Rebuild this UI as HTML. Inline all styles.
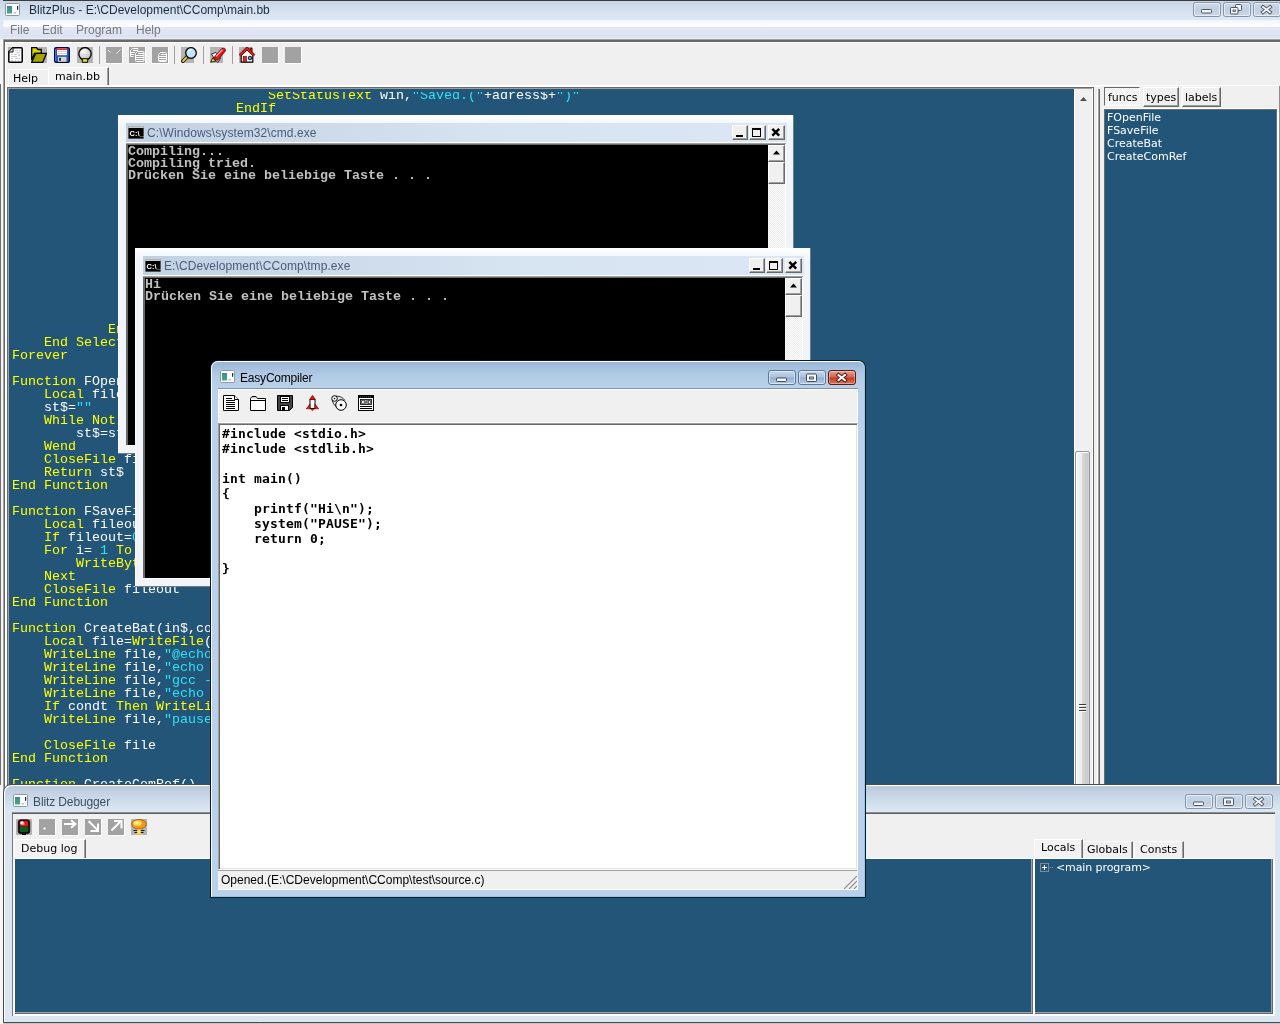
<!DOCTYPE html>
<html lang="en">
<head>
<meta charset="utf-8">
<title>BlitzPlus - E:\CDevelopment\CComp\main.bb</title>
<style>
*{box-sizing:border-box;margin:0;padding:0}
html,body{width:1280px;height:1024px;overflow:hidden;background:#dce7f4}
body{position:relative;font-family:"Liberation Sans",sans-serif;font-size:12px;color:#000}
.a{position:absolute}
body>div{will-change:transform}
.ui{font-family:"Liberation Sans",sans-serif;font-size:12px;white-space:pre}
.vd{font-family:"DejaVu Sans","Liberation Sans",sans-serif;font-size:11px;white-space:pre}
.blue{background:#235578}
.face{background:#f0f0f0}
/* ---------- main window ---------- */
#main{left:0;top:0;width:1280px;height:1024px;background:#dce7f4}
#mtitle{left:0;top:0;width:1280px;height:20px;background:linear-gradient(#c6d4e4,#d4e0ee 50%,#dde8f4)}
#mtitle .topline{left:3px;top:0;width:1277px;height:1px;background:#3c3c3c}
#mmenu{left:3px;top:20px;width:1277px;height:19px;background:linear-gradient(#f1f5fa 0,#fdfdfe 30%,#fefefe 36%,#e3e7f6 38%,#dde1f2 90%,#eceff7 100%)}
#mmenu span{position:absolute;top:3px;color:#7a7a7a;font-size:12px}
#mclient{background:#f0f0f0}
.code{font-family:"Liberation Mono",monospace;font-size:13.333px;line-height:13px;white-space:pre;color:#ffffff}
.code i{font-style:normal;color:#ffff00}
.code b{font-weight:normal;color:#30e0f4}
.code div{height:13px}
.capm{width:28px;height:15px;border:1px solid #8595ab;border-radius:2.5px;background:linear-gradient(#cbd8e7,#c0cfe1 50%,#cad7e7);box-shadow:inset 0 0 0 1px rgba(255,255,255,.55)}
/*CMDCSS*/
.cmd{background:linear-gradient(#fdfeff,#f1f5fb 12px,#f1f5fb);box-shadow:inset -1px -1px 0 #6f7b89, inset 1px 1px 0 #fff}
.cmdtitle{background:linear-gradient(90deg,#c2d1e2,#d6e3f1 55%,#dbe7f4)}
.cbtn{height:15px;background:#f0f0f0;border:1px solid;border-color:#fff #696969 #696969 #fff;box-shadow:inset -1px -1px 0 #a0a0a0}
.con{background:#000;color:#c0c0c0;font-family:"Liberation Mono",monospace;font-weight:bold;font-size:13.333px;line-height:12px;white-space:pre;overflow:hidden;padding-top:1px}
.sbtrack{background-color:#f6f6f6;background-image:repeating-conic-gradient(#fff 0 25%,#ececec 0 50%);background-size:2px 2px}
.sbbtn{background:#f0f0f0;border:1px solid;border-color:#fff #696969 #696969 #fff;box-shadow:inset -1px -1px 0 #a0a0a0}
/*/CMDCSS*//*TOPCSS*/
#dbg{background:#dbe6f3;border-radius:8px 0 0 0;box-shadow:0 2px 0 #c4c4c4}
.capi{width:28px;height:15px;border:1px solid #8595ab;border-radius:2.5px;background:linear-gradient(#cbd8e7,#c0cfe1 50%,#cad7e7);box-shadow:inset 0 0 0 1px rgba(255,255,255,.55)}
#easyo{background:#0a1628;border-radius:8px 8px 0 0}
#easy{background:#b9d1ea;border-radius:7px 7px 0 0;box-shadow:inset 1px 1px 0 rgba(255,255,255,.95), inset -1px -1px 0 #7fd0e8}
.capa{height:15px;border:1px solid #5f7796;border-radius:3px;background:linear-gradient(#c6d8ec,#a9c1de 48%,#93b0d2 52%,#b4cbe4);box-shadow:inset 0 0 0 1px rgba(255,255,255,.5)}
.capx{height:15px;border:1px solid #5a1d12;border-radius:3px;background:linear-gradient(#e6a092,#d0644e 48%,#bf3a20 52%,#d8735a);box-shadow:inset 0 0 0 1px rgba(255,255,255,.35)}
.fixed{font-family:"DejaVu Sans Mono","Liberation Mono",monospace;font-weight:bold;font-size:13px;letter-spacing:.17px;line-height:15px;white-space:pre;color:#000}
/*/TOPCSS*/</style>
</head>
<body>
<!-- ================= BlitzPlus main window ================= -->
<div id="main" class="a">
  <div id="mtitle" class="a"><div class="a topline"></div>
    <svg class="a" style="left:5px;top:3px" width="15" height="13" viewBox="0 0 15 13"><defs><linearGradient id="ag0" x1="0" y1="0" x2="0" y2="1"><stop offset="0" stop-color="#3f7fb0"/><stop offset=".35" stop-color="#3e9a8a"/><stop offset="1" stop-color="#48a878"/></linearGradient></defs><rect x=".5" y=".5" width="14" height="12" rx="1" fill="#fdfdfd" stroke="#8d99a6"/><rect x="2" y="3" width="5" height="7.500" fill="url(#ag0)"/><rect x="8.500" y="9" width="2.500" height="1.500" fill="#c0c0c0"/><rect x="12" y="3" width="1.200" height="3.800" fill="#1c2c3c"/></svg>
    <div class="a ui" style="left:29px;top:3px;color:#1e2b3c">BlitzPlus - E:\CDevelopment\CComp\main.bb</div>
  <div class="a capm" style="left:1193px;top:2px"><svg width="26" height="13" viewBox="0 0 26 13" style="display:block"><rect x="7.500" y="6.500" width="10" height="3.500" rx=".8" fill="#f4f6f9" stroke="#4c5666"/></svg></div>
    <div class="a capm" style="left:1223px;top:2px"><svg width="26" height="13" viewBox="0 0 26 13" style="display:block"><rect x="11.500" y="1.500" width="6" height="6" rx=".8" fill="#f4f6f9" stroke="#4c5666"/><rect x="6.500" y="4.500" width="7.500" height="6.500" rx=".8" fill="#f4f6f9" stroke="#4c5666"/><rect x="9" y="7" width="2.500" height="1.500" fill="#c8d4e2" stroke="#4c5666" stroke-width=".8"/></svg></div>
    <div class="a capm" style="left:1253px;top:2px"><svg width="26" height="13" viewBox="0 0 26 13" style="display:block"><path d="M9 4L16 9.200M16 4L9 9.200" stroke="#4c5666" stroke-width="3.600" stroke-linecap="square"/><path d="M9 4L16 9.200M16 4L9 9.200" stroke="#f4f6f9" stroke-width="1.800" stroke-linecap="square"/></svg></div>
  </div>
  <div id="mmenu" class="a">
    <span style="left:7px">File</span><span style="left:39px">Edit</span><span style="left:73px">Program</span><span style="left:133px">Help</span>
  </div>
  <div class="a" style="left:0;top:39px;width:3px;height:985px;background:#f6f6f6"></div>
  <div class="a" style="left:0;top:84px;width:1px;height:701px;background:#6d6d6d"></div>
  <div class="a" style="left:3px;top:39px;width:1277px;height:985px;background:#a0a0a0"></div>
  <div class="a" style="left:4px;top:40px;width:1276px;height:984px;background:#696969"></div>
  <div class="a" style="left:5px;top:42px;width:1275px;height:982px;background:#fff"></div>
  <div id="mclient" class="a" style="left:6px;top:43px;width:1274px;height:981px"></div>
  <div class="a" style="left:6px;top:85px;width:1px;height:939px;background:#fff"></div>
</div>
<!--MAIN-CONTENT-->
<svg class="a" style="left:8px;top:47px" width="16" height="16" viewBox="0 0 16 16" ><path d="M0 0h6v4h-6z" fill="#b4b4b4"/><path d="M4.800 .8H13.200Q14.200 .8 14.200 1.800V14.200Q14.200 15.200 13.200 15.200H1.800Q.8 15.200 .8 14.200V4.800Z" fill="#fff" stroke="#000" stroke-width="1.500"/><path d="M5 1V5H1" fill="#f4f4f4" stroke="#000" stroke-width="1"/><path d="M7 3.500h3M11 3.500h1.500M8 5.500h4M3 7.500h2M6 7.500h3M3 9.500h6M3 11.500h2M7 11.500h5M3 13.500h2M7 13.500h1M10 13.500h1" stroke="#d0d0d0"/><rect x="10" y="7" width="2" height="2" fill="#d0d0d0"/></svg>
<svg class="a" style="left:31px;top:47px" width="16" height="16" viewBox="0 0 16 16" ><rect width="16" height="16" fill="#b4b4b4"/><path d="M.7 .7H5.500L7 2.500H10.300V6.500H3.500L.7 13Z" fill="#d6d600" stroke="#000" stroke-width="1.300"/><path d="M4.800 6.300H15.500L11.800 15.300H.7Z" fill="#a4a400" stroke="#000" stroke-width="1.300"/></svg>
<svg class="a" style="left:54px;top:47px" width="16" height="16" viewBox="0 0 16 16" ><rect x=".6" y=".6" width="14.800" height="14.800" rx="1.500" fill="#1f58c0" stroke="#00083a" stroke-width="1.200"/><path d="M1.500 2v12" stroke="#3d78d8" stroke-width="1"/><rect x="3" y="1.200" width="10" height="7" fill="#fff"/><rect x="3" y="1.200" width="10" height="1.800" fill="#e03030"/><path d="M3 4.500h10M3 6.500h10" stroke="#f0c8c8"/><rect x="4" y="9.800" width="8.500" height="5" fill="#d8d4cc"/><rect x="5" y="10.800" width="2" height="3" fill="#303030"/></svg>
<svg class="a" style="left:77px;top:47px" width="16" height="16" viewBox="0 0 16 16" ><rect width="16" height="16" fill="#b4b4b4"/><defs><radialGradient id="bg" cx=".4" cy=".35" r=".7"><stop offset="0" stop-color="#fff"/><stop offset="1" stop-color="#b8b8b8"/></radialGradient></defs><circle cx="8" cy="6.800" r="6.200" fill="url(#bg)" stroke="#000" stroke-width="1.300"/><ellipse cx="8" cy="8.500" rx="2.500" ry="1.500" fill="none" stroke="#c8d0d8" stroke-width=".8"/><path d="M5.300 11.700h5.400v3.600h-5.400z" fill="#e8e020" stroke="#000" stroke-width="1"/></svg>
<svg class="a" style="left:106px;top:47px" width="16" height="16" viewBox="0 0 16 16" ><rect width="16" height="16" fill="#a2a2a2"/><path d="M2 3l2.300 2.300M10.500 6.500l4-4" stroke="#fff" stroke-width="1"/></svg>
<div class="a" style="left:106px;top:47px;width:17px;height:17px;border-right:1px solid #fff;border-bottom:1px solid #fff"></div>
<svg class="a" style="left:129px;top:47px" width="16" height="16" viewBox="0 0 16 16" ><rect width="16" height="16" fill="#a2a2a2"/><path d="M3.500 1.500h5.500v1M1.500 3.500v6h3M1.500 3.500l2-2" fill="none" stroke="#fff"/><path d="M4 3.500h5M2 5.500h4M2 7.500h3" stroke="#fff"/><path d="M8.500 4.500h5.500q1 0 1 1v8q0 1-1 1h-6.500q-1 0-1-1v-7z" fill="#a2a2a2" stroke="#fff"/><path d="M9 6.500h6M7 8.500h8M7 10.500h8M7 12.500h8" stroke="#fff"/></svg>
<div class="a" style="left:129px;top:47px;width:17px;height:17px;border-right:1px solid #fff;border-bottom:1px solid #fff"></div>
<svg class="a" style="left:152px;top:47px" width="16" height="16" viewBox="0 0 16 16" ><rect width="16" height="16" fill="#a2a2a2"/><path d="M8.500 5.500h5q1 0 1 1v7q0 1-1 1h-6q-1 0-1-1v-6z" fill="#a2a2a2" stroke="#fff"/><path d="M9 7.500h5M7 9.500h7M7 11.500h7M7 13.500h7" stroke="#fff"/></svg>
<div class="a" style="left:152px;top:47px;width:17px;height:17px;border-right:1px solid #fff;border-bottom:1px solid #fff"></div>
<svg class="a" style="left:181px;top:47px" width="16" height="16" viewBox="0 0 16 16" ><rect width="13" height="16" fill="#b4b4b4"/><path d="M6.500 9.500L2 14" stroke="#000" stroke-width="3.600" stroke-linecap="round"/><path d="M6.500 9.500L2 14" stroke="#e8e020" stroke-width="1.800" stroke-linecap="round"/><circle cx="10" cy="6" r="5.300" fill="#c4e6f8" stroke="#000" stroke-width="1.300"/><path d="M7 4.500Q8 2.500 10.500 2.500" stroke="#fff" stroke-width="1" fill="none"/></svg>
<svg class="a" style="left:210px;top:47px" width="16" height="16" viewBox="0 0 16 16" ><rect width="13" height="16" fill="#b4b4b4"/><path d="M1.500 7L6 5.500L10.500 11L8 15.500L5 13Z" fill="#fff" stroke="#000" stroke-width=".8"/><path d="M3.500 11L11.500 1.800Q15.800 -.2 15.300 4L7.500 13.500Z" fill="#e01818" stroke="#600" stroke-width=".9"/><path d="M6 9.500L12.500 2.500" stroke="#ffa0a0" stroke-width="1.300"/><path d="M.8 15.200L2.500 11L6 14Z" fill="#f8e020" stroke="#000" stroke-width=".8"/></svg>
<svg class="a" style="left:239px;top:47px" width="16" height="16" viewBox="0 0 16 16" ><rect x="0" width="13" height="16" fill="#b4b4b4"/><path d="M2.200 8V15.200H13.800V8L8 2.500Z" fill="#fff" stroke="#000" stroke-width="1.200"/><rect x="11" y="1" width="2.200" height="4.500" fill="#c01010" stroke="#400" stroke-width=".5"/><path d="M.8 8.500L8 1.300L15.200 8.500" fill="none" stroke="#500" stroke-width="3"/><path d="M.8 8.500L8 1.300L15.200 8.500" fill="none" stroke="#d82020" stroke-width="1.800"/><rect x="4.200" y="9.500" width="3.300" height="5.500" fill="#e82020" stroke="#600" stroke-width=".6"/><circle cx="11" cy="11" r="1.800" fill="#40a8e8" stroke="#000" stroke-width=".9"/></svg>
<svg class="a" style="left:262px;top:47px" width="16" height="16" viewBox="0 0 16 16" ><rect width="16" height="16" fill="#a2a2a2"/></svg>
<div class="a" style="left:262px;top:47px;width:17px;height:17px;border-right:1px solid #fff;border-bottom:1px solid #fff"></div>
<svg class="a" style="left:285px;top:47px" width="16" height="16" viewBox="0 0 16 16" ><rect width="16" height="16" fill="#a2a2a2"/></svg>
<div class="a" style="left:285px;top:47px;width:17px;height:17px;border-right:1px solid #fff;border-bottom:1px solid #fff"></div>
<div class="a" style="left:99px;top:46px;width:1px;height:18px;background:#a0a0a0"></div>
<div class="a" style="left:174px;top:46px;width:1px;height:18px;background:#a0a0a0"></div>
<div class="a" style="left:203px;top:46px;width:1px;height:18px;background:#a0a0a0"></div>
<div class="a" style="left:232px;top:46px;width:1px;height:18px;background:#a0a0a0"></div>
<div class="a" style="left:8px;top:69px;width:40px;height:17px;border-top:1px solid #fff;border-left:1px solid #fff;background:#f0f0f0"></div>
<div class="a vd" style="left:13px;top:72px">Help</div>
<div class="a" style="left:48px;top:67px;width:61px;height:19px;border-top:1px solid #fff;border-left:1px solid #fff;border-right:1px solid #696969;box-shadow:inset -1px 0 0 #a0a0a0;background:#f3f3f3"></div>
<div class="a vd" style="left:55px;top:70px">main.bb</div>
<div class="a" style="left:5px;top:85px;width:1274px;height:2px;background:#fff"></div><div class="a" style="left:1100px;top:86px;width:179px;height:1px;background:#f0f0f0"></div>
<div class="a" style="left:7px;top:87px;width:1087px;height:720px;background:#696969"></div>
<div class="a" style="left:8px;top:88px;width:1085px;height:720px;background:#a0a0a0"></div>
<div class="a blue" id="ed" style="left:9px;top:89px;width:1065px;height:720px;overflow:hidden">

<div class="a code" style="left:3px;top:0px">                                <i>SetStatusText</i> win,<b>"Saved.("</b>+adress$+<b>")"</b></div>
<div class="a code" style="left:3px;top:13px">                            <i>EndIf</i></div>
<div class="a code" style="left:3px;top:234px">            <i>EndIf</i></div>
<div class="a code" style="left:3px;top:247px">    <i>End Select</i></div>
<div class="a code" style="left:3px;top:260px"><i>Forever</i></div>
<div class="a code" style="left:3px;top:286px"><i>Function</i> FOpenFile(adress$)</div>
<div class="a code" style="left:3px;top:299px">    <i>Local</i> file=<i>ReadFile</i>(adress$)</div>
<div class="a code" style="left:3px;top:312px">    st$=<b>""</b></div>
<div class="a code" style="left:3px;top:325px">    <i>While Not Eof</i>(file)</div>
<div class="a code" style="left:3px;top:338px">        st$=st$+<i>Chr</i>(<i>ReadByte</i>(file))</div>
<div class="a code" style="left:3px;top:351px">    <i>Wend</i></div>
<div class="a code" style="left:3px;top:364px">    <i>CloseFile</i> file</div>
<div class="a code" style="left:3px;top:377px">    <i>Return</i> st$</div>
<div class="a code" style="left:3px;top:390px"><i>End Function</i></div>
<div class="a code" style="left:3px;top:416px"><i>Function</i> FSaveFile(adress$,st$)</div>
<div class="a code" style="left:3px;top:429px">    <i>Local</i> fileout=<i>WriteFile</i>(adress$)</div>
<div class="a code" style="left:3px;top:442px">    <i>If</i> fileout=<b>0</b> <i>Then Return</i></div>
<div class="a code" style="left:3px;top:455px">    <i>For</i> i= <b>1</b> <i>To Len</i>(st$)</div>
<div class="a code" style="left:3px;top:468px">        <i>WriteByte</i> fileout,<i>Asc</i>(<i>Mid</i>(st$,i,<b>1</b>))</div>
<div class="a code" style="left:3px;top:481px">    <i>Next</i></div>
<div class="a code" style="left:3px;top:494px">    <i>CloseFile</i> fileout</div>
<div class="a code" style="left:3px;top:507px"><i>End Function</i></div>
<div class="a code" style="left:3px;top:533px"><i>Function</i> CreateBat(in$,condt)</div>
<div class="a code" style="left:3px;top:546px">    <i>Local</i> file=<i>WriteFile</i>(<b>"tmp.bat"</b>)</div>
<div class="a code" style="left:3px;top:559px">    <i>WriteLine</i> file,<b>"@echo off"</b></div>
<div class="a code" style="left:3px;top:572px">    <i>WriteLine</i> file,<b>"echo Compiling..."</b></div>
<div class="a code" style="left:3px;top:585px">    <i>WriteLine</i> file,<b>"gcc -o tmp.exe "</b>+in$</div>
<div class="a code" style="left:3px;top:598px">    <i>WriteLine</i> file,<b>"echo Compiling tried."</b></div>
<div class="a code" style="left:3px;top:611px">    <i>If</i> condt <i>Then WriteLine</i> file,<b>"tmp.exe"</b></div>
<div class="a code" style="left:3px;top:624px">    <i>WriteLine</i> file,<b>"pause"</b></div>
<div class="a code" style="left:3px;top:650px">    <i>CloseFile</i> file</div>
<div class="a code" style="left:3px;top:663px"><i>End Function</i></div>
<div class="a code" style="left:3px;top:689px"><i>Function</i> CreateComRef()</div>
<div class="a blue" style="left:0;top:0;width:1065px;height:3px"></div>
</div>
<div class="a" style="left:1074px;top:89px;width:1px;height:720px;background:#fff"></div>
<div class="a" style="left:1075px;top:89px;width:17px;height:720px;background:#f0f0f0"></div>
<div class="a" style="left:1092px;top:88px;width:1px;height:720px;background:#fff"></div>
<svg class="a" style="left:1080px;top:97px" width="7" height="4" viewBox="0 0 7 4"><path d="M0 4L3.500 0L7 4Z" fill="#505050"/></svg>
<div class="a" style="left:1075px;top:451px;width:15px;height:340px;border:1px solid #979797;border-radius:2px;box-shadow:inset 1px 1px 0 #fff;background:linear-gradient(90deg,#f6f6f6,#ececec 42%,#d6d6da 52%,#cacace 90%,#d8d8dc)"></div>
<div class="a" style="left:1079px;top:704px;width:7px;height:1px;background:#3c3c3c;box-shadow:0 1px 0 #fafafa,0 3px 0 #3c3c3c,0 4px 0 #fafafa,0 6px 0 #3c3c3c,0 7px 0 #fafafa"></div>

<div class="a" style="left:1097px;top:89px;width:1px;height:720px;background:#fff"></div>
<div class="a" style="left:1098px;top:89px;width:1px;height:720px;background:#a0a0a0"></div><div class="a" style="left:1099px;top:89px;width:1px;height:720px;background:#696969"></div>
<div class="a" style="left:1104px;top:87px;width:36px;height:19px;border:1px solid;border-color:#696969 #fff #fff #696969;background:#f8f8f8;background-image:repeating-conic-gradient(#fff 0 25%,#ececec 0 50%);background-size:2px 2px"></div>
<div class="a vd" style="left:1108px;top:91px">funcs</div>
<div class="a" style="left:1143px;top:87px;width:36px;height:20px;border:1px solid;border-color:#fff #696969 #696969 #fff;box-shadow:inset -1px -1px 0 #a0a0a0;background:#f0f0f0"></div>
<div class="a vd" style="left:1146px;top:91px">types</div>
<div class="a" style="left:1182px;top:87px;width:39px;height:20px;border:1px solid;border-color:#fff #696969 #696969 #fff;box-shadow:inset -1px -1px 0 #a0a0a0;background:#f0f0f0"></div>
<div class="a vd" style="left:1185px;top:91px">labels</div>
<div class="a" style="left:1103px;top:108px;width:176px;height:700px;background:#fff"></div><div class="a" style="left:1103px;top:109px;width:1px;height:700px;background:#f0f0f0"></div><div class="a" style="left:1104px;top:109px;width:173px;height:700px;background:#626e78"></div>
<div class="a blue" style="left:1105px;top:110px;width:171px;height:700px"></div>
<div class="a" style="left:1279px;top:86px;width:1px;height:722px;background:#8e8e8e"></div>
<div class="a vd" style="left:1107px;top:111px;color:#fff;line-height:13px">FOpenFile
FSaveFile
CreateBat
CreateComRef</div>

<!--/MAIN-CONTENT-->
<!--CMD1-->
<div class="a cmd" style="left:118px;top:115px;width:676px;height:339px">
<div class="a cmdtitle" style="left:8px;top:8px;width:661px;height:19px"></div>
<svg class="a" style="left:10px;top:11px" width="16" height="13" viewBox="0 0 15 13" preserveAspectRatio="none"><rect width="15" height="13" fill="#000"/><rect x="0" y="0" width="15" height="2" fill="#c8c8c8"/><rect x="0" y="0" width="15" height="13" fill="none" stroke="#9aa4b0" stroke-width="1"/><text x="1.500" y="10" font-family="Liberation Sans,sans-serif" font-weight="bold" font-size="7" fill="#fff">C:\_</text></svg>
<div class="a ui" style="left:29px;top:12px;color:#4a5c7c;line-height:13px;letter-spacing:.08px">C:\Windows\system32\cmd.exe</div>
<div class="a cbtn" style="left:614px;top:10px;width:16px"><svg width="14" height="13" viewBox="0 0 14 13" style="display:block"><rect x="3" y="9" width="7" height="2" fill="#000"/></svg></div>
<div class="a cbtn" style="left:631px;top:10px;width:17px"><svg width="14" height="13" viewBox="0 0 14 13" style="display:block"><rect x="2.500" y="3" width="8" height="7.500" fill="none" stroke="#000"/><rect x="2" y="2" width="9" height="2" fill="#000"/></svg></div>
<div class="a cbtn" style="left:650px;top:10px;width:17px"><svg width="14" height="13" viewBox="0 0 14 13" style="display:block"><path d="M3.300 2.800L10.200 9.700M10.200 2.800L3.300 9.700" stroke="#000" stroke-width="2.400"/></svg></div>
<div class="a" style="left:8px;top:27px;width:660px;height:1px;background:#fff"></div>
<div class="a" style="left:8px;top:28px;width:660px;height:1px;background:#a0a0a0"></div>
<div class="a" style="left:8px;top:29px;width:660px;height:302px;background:#fff"></div><div class="a" style="left:8px;top:29px;width:659px;height:301px;background:#696969"></div>
<div class="a con" style="left:10px;top:30px;width:640px;height:300px">Compiling...
Compiling tried.
Drücken Sie eine beliebige Taste . . .</div>
<div class="a sbtrack" style="left:650px;top:30px;width:17px;height:300px"></div>
<div class="a sbbtn" style="left:650px;top:30px;width:17px;height:17px"><svg width="15" height="15" viewBox="0 0 15 15" style="display:block"><path d="M4 8.500L7.500 4.500L11 8.500Z" fill="#000"/></svg></div>
<div class="a sbbtn" style="left:650px;top:47px;width:17px;height:22px"></div>
<div class="a" style="left:667px;top:29px;width:1px;height:301px;background:#fff"></div>
</div>
<!--/CMD1-->
<!--CMD2-->
<div class="a cmd" style="left:135px;top:248px;width:676px;height:339px">
<div class="a cmdtitle" style="left:8px;top:8px;width:661px;height:19px"></div>
<svg class="a" style="left:10px;top:11px" width="16" height="13" viewBox="0 0 15 13" preserveAspectRatio="none"><rect width="15" height="13" fill="#000"/><rect x="0" y="0" width="15" height="2" fill="#c8c8c8"/><rect x="0" y="0" width="15" height="13" fill="none" stroke="#9aa4b0" stroke-width="1"/><text x="1.500" y="10" font-family="Liberation Sans,sans-serif" font-weight="bold" font-size="7" fill="#fff">C:\_</text></svg>
<div class="a ui" style="left:29px;top:12px;color:#4a5c7c;line-height:13px;letter-spacing:.08px">E:\CDevelopment\CComp\tmp.exe</div>
<div class="a cbtn" style="left:614px;top:10px;width:16px"><svg width="14" height="13" viewBox="0 0 14 13" style="display:block"><rect x="3" y="9" width="7" height="2" fill="#000"/></svg></div>
<div class="a cbtn" style="left:631px;top:10px;width:17px"><svg width="14" height="13" viewBox="0 0 14 13" style="display:block"><rect x="2.500" y="3" width="8" height="7.500" fill="none" stroke="#000"/><rect x="2" y="2" width="9" height="2" fill="#000"/></svg></div>
<div class="a cbtn" style="left:650px;top:10px;width:17px"><svg width="14" height="13" viewBox="0 0 14 13" style="display:block"><path d="M3.300 2.800L10.200 9.700M10.200 2.800L3.300 9.700" stroke="#000" stroke-width="2.400"/></svg></div>
<div class="a" style="left:8px;top:27px;width:660px;height:1px;background:#fff"></div>
<div class="a" style="left:8px;top:28px;width:660px;height:1px;background:#a0a0a0"></div>
<div class="a" style="left:8px;top:29px;width:660px;height:302px;background:#fff"></div><div class="a" style="left:8px;top:29px;width:659px;height:301px;background:#696969"></div>
<div class="a con" style="left:10px;top:30px;width:640px;height:300px">Hi
Drücken Sie eine beliebige Taste . . .</div>
<div class="a sbtrack" style="left:650px;top:30px;width:17px;height:300px"></div>
<div class="a sbbtn" style="left:650px;top:30px;width:17px;height:17px"><svg width="15" height="15" viewBox="0 0 15 15" style="display:block"><path d="M4 8.500L7.500 4.500L11 8.500Z" fill="#000"/></svg></div>
<div class="a sbbtn" style="left:650px;top:47px;width:17px;height:22px"></div>
<div class="a" style="left:667px;top:29px;width:1px;height:301px;background:#fff"></div>
</div>
<!--/CMD2-->
<!--DEBUGGER-->
<div class="a" id="dbg" style="left:3px;top:785px;width:1280px;height:237px">
<div class="a" style="left:0;top:0;width:1280px;height:28px;border-radius:8px 0 0 0;background:linear-gradient(#b9c9db,#c6d4e4 35%,#d6e2ef 75%,#dde8f4)"></div>
<svg class="a" style="left:10px;top:9px" width="15" height="13" viewBox="0 0 15 13"><defs><linearGradient id="ag1" x1="0" y1="0" x2="0" y2="1"><stop offset="0" stop-color="#3f7fb0"/><stop offset=".35" stop-color="#3e9a8a"/><stop offset="1" stop-color="#48a878"/></linearGradient></defs><rect x=".5" y=".5" width="14" height="12" rx="1" fill="#fdfdfd" stroke="#8d99a6"/><rect x="2" y="3" width="5" height="7.500" fill="url(#ag1)"/><rect x="8.500" y="9" width="2.500" height="1.500" fill="#c0c0c0"/><rect x="12" y="3" width="1.200" height="3.800" fill="#1c2c3c"/></svg>
<div class="a ui" style="left:30px;top:10px;color:#3d4f66;line-height:14px;letter-spacing:-.12px">Blitz Debugger</div>
<div class="a capi" style="left:1182px;top:9px"><svg width="26" height="13" viewBox="0 0 26 13" style="display:block"><rect x="7.500" y="7" width="10" height="3.500" rx=".8" fill="#f4f6f9" stroke="#4c5666"/></svg></div>
<div class="a capi" style="left:1212px;top:9px"><svg width="26" height="13" viewBox="0 0 26 13" style="display:block"><rect x="7.500" y="3" width="10" height="7.500" rx=".8" fill="#f4f6f9" stroke="#4c5666"/><rect x="10.500" y="6" width="4" height="2" fill="#c8d4e2" stroke="#4c5666" stroke-width=".9"/></svg></div>
<div class="a capi" style="left:1242px;top:9px"><svg width="26" height="13" viewBox="0 0 26 13" style="display:block"><path d="M9.200 4L15.800 9.200M15.800 4L9.200 9.200" stroke="#4c5666" stroke-width="3.600" stroke-linecap="square"/><path d="M9.200 4L15.800 9.200M15.800 4L9.200 9.200" stroke="#f4f6f9" stroke-width="1.800" stroke-linecap="square"/></svg></div>
<div class="a" style="left:9px;top:27px;width:1263px;height:1px;background:#8a9098"></div><div class="a" style="left:9px;top:28px;width:1263px;height:1px;background:#5e5e5e"></div>
<div class="a" style="left:9px;top:29px;width:1263px;height:202px;background:#f0f0f0;border-left:1px solid #7c7c7c"></div>

<svg class="a" style="left:13px;top:34px" width="16" height="16" viewBox="0 0 16 16"><rect width="16" height="16" fill="#b4b4b4"/><rect x="2.200" y=".7" width="11.600" height="14" rx="2.500" fill="#101010" stroke="#000" stroke-width=".6"/><rect x="3.800" y="2" width="8.400" height="5.500" rx="1" fill="#f01010"/><rect x="3.800" y="7.500" width="8.400" height="5.500" rx="1" fill="#0f5a1c"/><circle cx="6" cy="4" r="1.800" fill="#fff"/><circle cx="7.500" cy="5" r="1.200" fill="#ff9090"/><rect x="6" y="14.700" width="4" height="1.300" fill="#000"/></svg>
<svg class="a" style="left:36px;top:34px" width="16" height="16" viewBox="0 0 16 16"><rect width="16" height="16" fill="#a2a2a2"/><rect x="4.500" y="8.500" width="2" height="2" fill="#fff"/></svg>
<div class="a" style="left:36px;top:34px;width:17px;height:17px;border-right:1px solid #fff;border-bottom:1px solid #fff"></div>
<svg class="a" style="left:59px;top:34px" width="16" height="16" viewBox="0 0 16 16"><rect width="16" height="16" fill="#a2a2a2"/><path d="M2 5h11" stroke="#fff" stroke-width="2"/><path d="M9 1.200l4.500 3.800l-4.500 3.800" stroke="#fff" stroke-width="2" fill="none"/></svg>
<div class="a" style="left:59px;top:34px;width:17px;height:17px;border-right:1px solid #fff;border-bottom:1px solid #fff"></div>
<svg class="a" style="left:82px;top:34px" width="16" height="16" viewBox="0 0 16 16"><rect width="16" height="16" fill="#a2a2a2"/><path d="M3.500 2l9 9" stroke="#fff" stroke-width="2"/><path d="M13 4.500v7.500h-7.500" stroke="#fff" stroke-width="2" fill="none"/></svg>
<div class="a" style="left:82px;top:34px;width:17px;height:17px;border-right:1px solid #fff;border-bottom:1px solid #fff"></div>
<svg class="a" style="left:105px;top:34px" width="16" height="16" viewBox="0 0 16 16"><rect width="16" height="16" fill="#a2a2a2"/><path d="M3.500 11.500l9-9" stroke="#fff" stroke-width="2"/><path d="M6 2h7.500v7.500" stroke="#fff" stroke-width="2" fill="none"/></svg>
<div class="a" style="left:105px;top:34px;width:17px;height:17px;border-right:1px solid #fff;border-bottom:1px solid #fff"></div>
<svg class="a" style="left:128px;top:34px" width="16" height="16" viewBox="0 0 16 16"><rect width="16" height="16" fill="#b4b4b4"/><path d="M6.500 8h3l.3 5.500l2 2h-7.600l2-2z" fill="#f8c848"/><ellipse cx="8" cy="5.200" rx="7.400" ry="4.800" fill="#f09818" stroke="#a04800" stroke-width=".7"/><ellipse cx="6.500" cy="4.200" rx="4.200" ry="2.600" fill="#ffd850"/><ellipse cx="5.500" cy="3.500" rx="2" ry="1.200" fill="#fff4b0"/><path d="M2.500 11.500h4M9.500 11.500h4M3.500 13.500h3M9.500 13.500h3" stroke="#181818" stroke-width="1"/><path d="M6.500 10.500h3v4h-3z" fill="#ffe070"/></svg>
<div class="a" style="left:11px;top:54px;width:72px;height:19px;border-top:1px solid #fff;border-left:1px solid #fff;border-right:1px solid #696969;box-shadow:inset -1px 0 0 #a0a0a0;background:#f3f3f3"></div>
<div class="a vd" style="left:18px;top:57px">Debug log</div>
<div class="a" style="left:10px;top:73px;width:1262px;height:158px;background:#fff"></div>
<div class="a" style="left:12px;top:74px;width:1018px;height:155px;background:#696969"></div>
<div class="a" style="left:12px;top:74px;width:1017px;height:154px;background:#93a5b5"></div>
<div class="a blue" style="left:12px;top:74px;width:1016px;height:153px"></div>
<div class="a" style="left:1031px;top:54px;width:49px;height:19px;border-top:1px solid #fff;border-left:1px solid #fff;border-right:1px solid #696969;box-shadow:inset -1px 0 0 #a0a0a0;background:#f3f3f3"></div>
<div class="a vd" style="left:1038px;top:56px">Locals</div>
<div class="a" style="left:1080px;top:56px;width:50px;height:17px;border-top:1px solid #fff;border-right:1px solid #696969;box-shadow:inset -1px 0 0 #a0a0a0;background:#f0f0f0"></div>
<div class="a vd" style="left:1084px;top:58px">Globals</div>
<div class="a" style="left:1131px;top:56px;width:50px;height:17px;border-top:1px solid #fff;border-left:1px solid #fff;border-right:1px solid #696969;box-shadow:inset -1px 0 0 #a0a0a0;background:#f0f0f0"></div>
<div class="a vd" style="left:1137px;top:58px">Consts</div>
<div class="a" style="left:1032px;top:74px;width:238px;height:155px;background:#696969"></div>
<div class="a" style="left:1032px;top:74px;width:237px;height:154px;background:#93a5b5"></div>
<div class="a blue" style="left:1032px;top:74px;width:236px;height:153px"></div>
<svg class="a" style="left:1037px;top:78px" width="9" height="9" viewBox="0 0 9 9"><rect x=".5" y=".5" width="8" height="8" fill="none" stroke="#7f8b96"/><path d="M2 4.500h5M4.500 2v5" stroke="#fff"/></svg>
<div class="a" style="left:1047px;top:82px;width:1px;height:1px;background:#8ea0b0;box-shadow:2px 0 0 #8ea0b0"></div><div class="a vd" style="left:1053px;top:76px;color:#fff;letter-spacing:-.1px">&lt;main program&gt;</div>
<div class="a" style="left:0;top:-1px;width:1281px;height:239px;border-radius:8px 0 0 0;border:1px solid #4a4a4a;box-shadow:inset 1px 1px 0 #fff"></div>
</div>
<!--/DEBUGGER-->
<!--EASY-->
<div class="a" id="easyo" style="left:210px;top:360px;width:656px;height:538px"><div class="a" id="easy" style="left:1px;top:1px;width:654px;height:536px">
<div class="a" style="left:1px;top:1px;width:652px;height:26px;border-radius:6px 6px 0 0;background:linear-gradient(#9ab7d7,#b2cbe5 50%,#bad1ea)"></div>
<svg class="a" style="left:9px;top:9px" width="15" height="13" viewBox="0 0 15 13"><defs><linearGradient id="ag2" x1="0" y1="0" x2="0" y2="1"><stop offset="0" stop-color="#3f7fb0"/><stop offset=".35" stop-color="#3e9a8a"/><stop offset="1" stop-color="#48a878"/></linearGradient></defs><rect x=".5" y=".5" width="14" height="12" rx="1" fill="#fdfdfd" stroke="#8d99a6"/><rect x="2" y="3" width="5" height="7.500" fill="url(#ag2)"/><rect x="8.500" y="9" width="2.500" height="1.500" fill="#c0c0c0"/><rect x="12" y="3" width="1.200" height="3.800" fill="#1c2c3c"/></svg>
<div class="a ui" style="left:29px;top:10px;color:#000;line-height:14px;letter-spacing:-.2px">EasyCompiler</div>
<div class="a capa" style="left:557px;top:9px;width:28px"><svg width="26" height="13" viewBox="0 0 26 13" style="display:block"><rect x="7.500" y="7" width="10" height="3.500" rx=".8" fill="#fafbfd" stroke="#3f4a5c"/></svg></div>
<div class="a capa" style="left:587px;top:9px;width:28px"><svg width="26" height="13" viewBox="0 0 26 13" style="display:block"><rect x="7.500" y="3" width="10" height="7.500" rx=".8" fill="#fafbfd" stroke="#3f4a5c"/><rect x="10.500" y="6" width="4" height="2" fill="#b8cbe2" stroke="#3f4a5c" stroke-width=".9"/></svg></div>
<div class="a capx" style="left:617px;top:9px;width:28px"><svg width="26" height="13" viewBox="0 0 26 13" style="display:block"><path d="M9.500 4L16 9.200M16 4L9.500 9.200" stroke="#4a1810" stroke-width="3.800" stroke-linecap="square"/><path d="M9.500 4L16 9.200M16 4L9.500 9.200" stroke="#fff" stroke-width="2" stroke-linecap="square"/></svg></div>
<div class="a" style="left:7px;top:27px;width:640px;height:1px;background:#7f93a8"></div>
<div class="a" style="left:7px;top:28px;width:640px;height:501px;background:#fff"></div>
<div class="a face" style="left:8px;top:29px;width:638px;height:499px"></div>
<div class="a face" style="left:7px;top:510px;width:1px;height:18px"></div>
<svg class="a" style="left:12px;top:34px" width="16" height="16" viewBox="0 0 16 16"><path d="M.5 .5H11.500L15.500 4.500V15.500H.5Z" fill="#fff" stroke="#000"/><path d="M11.500 .5V4.500H15.500" fill="#fff" stroke="#000"/><path d="M3 3.500h6M3 5.500h9M3 7.500h9M3 9.500h9M3 11.500h9M3 13.500h9" stroke="#000"/></svg>
<svg class="a" style="left:39px;top:34px" width="16" height="16" viewBox="0 0 16 16"><path d="M.5 15.500V3.500L2 1.500H6L7.500 3.500H15.500V15.500Z" fill="#fff" stroke="#000"/><path d="M1.200 3.500L2.300 2.200H5.700L6.700 3.500Z" fill="#c4c4c4"/><path d="M.5 5.500h15" stroke="#000" stroke-width="1"/></svg>
<svg class="a" style="left:66px;top:34px" width="16" height="16" viewBox="0 0 16 16"><path d="M.5 .5H15.500V12.500L12.500 15.500H.5Z" fill="#444" stroke="#000"/><rect x="3.500" y="1.500" width="9" height="6" fill="#fff" stroke="#000"/><path d="M5 3.500h6M5 5.500h6" stroke="#000"/><rect x="3.500" y="10.500" width="8" height="5" fill="#fff" stroke="#000"/><rect x="5" y="12" width="3" height="3.500" fill="#000"/></svg>
<svg class="a" style="left:93px;top:34px" width="16" height="16" viewBox="0 0 16 16"><g transform="translate(1.5,0)"><path d="M4.500 4.500H9.500V13.500H4.500Z" fill="#fff" stroke="#000"/><path d="M4 4.500L7 .3L10 4.500Z" fill="#e01010" stroke="#800" stroke-width=".6"/><path d="M4.500 9L.8 13.800H4.500ZM9.500 9L13.200 13.800H9.500Z" fill="#e01010" stroke="#800" stroke-width=".6"/><path d="M4.500 14h5L7 16Z" fill="#e82020"/></g></svg>
<svg class="a" style="left:120px;top:34px" width="16" height="16" viewBox="0 0 16 16"><circle cx="10" cy="10" r="5.300" fill="#fff" stroke="#000"/><circle cx="10" cy="10" r="1.300" fill="#000"/><circle cx="3.500" cy="3.500" r="2.800" fill="#fff" stroke="#000"/><circle cx="3.500" cy="3.500" r=".8" fill="#000"/><path d="M5 1.200Q11 1 14 5.500M1.200 5.500Q2 9 5 11.500" stroke="#000" stroke-width=".8" fill="none"/></svg>
<svg class="a" style="left:147px;top:34px" width="16" height="16" viewBox="0 0 16 16"><rect x=".5" y=".5" width="15" height="15" fill="#fff" stroke="#000"/><rect x="1" y="1" width="14" height="2" fill="#000"/><path d="M2 2h12" stroke="#999" stroke-width=".6" stroke-dasharray="1 1"/><rect x="2.500" y="4.500" width="11" height="5" fill="#fff" stroke="#000" stroke-width=".8"/><text x="2.800" y="8.700" font-size="5" font-weight="bold" font-family="Liberation Sans,sans-serif" fill="#000" textLength="10.400" lengthAdjust="spacingAndGlyphs">CMD</text><path d="M2 11.500h12M2 13.500h12" stroke="#000"/></svg>
<div class="a" style="left:7px;top:61px;width:640px;height:1px;background:#fff"></div>
<div class="a" style="left:7px;top:62px;width:640px;height:447px;background:#fff;border:1px solid;border-color:#a0a0a0 #fff #fff #a0a0a0;box-shadow:inset 1px 1px 0 #696969,inset -1px -1px 0 #e3e3e3"></div>
<div class="a fixed" style="left:11px;top:65px">#include &lt;stdio.h&gt;
#include &lt;stdlib.h&gt;

int main()
{
    printf("Hi\n");
    system("PAUSE");
    return 0;

}</div>
<div class="a" style="left:7px;top:509px;width:639px;height:1px;background:#a0a0a0"></div>
<div class="a ui" style="left:10px;top:512px;line-height:14px">Opened.(E:\CDevelopment\CComp\test\source.c)</div>
<svg class="a" style="left:633px;top:515px" width="13" height="13" viewBox="0 0 13 13"><path d="M0 13L13 0M5 13L13 5M10 13L13 10" stroke="#8c8c8c" stroke-width="1.200"/></svg>
</div></div>
<!--/EASY-->
</body>
</html>
